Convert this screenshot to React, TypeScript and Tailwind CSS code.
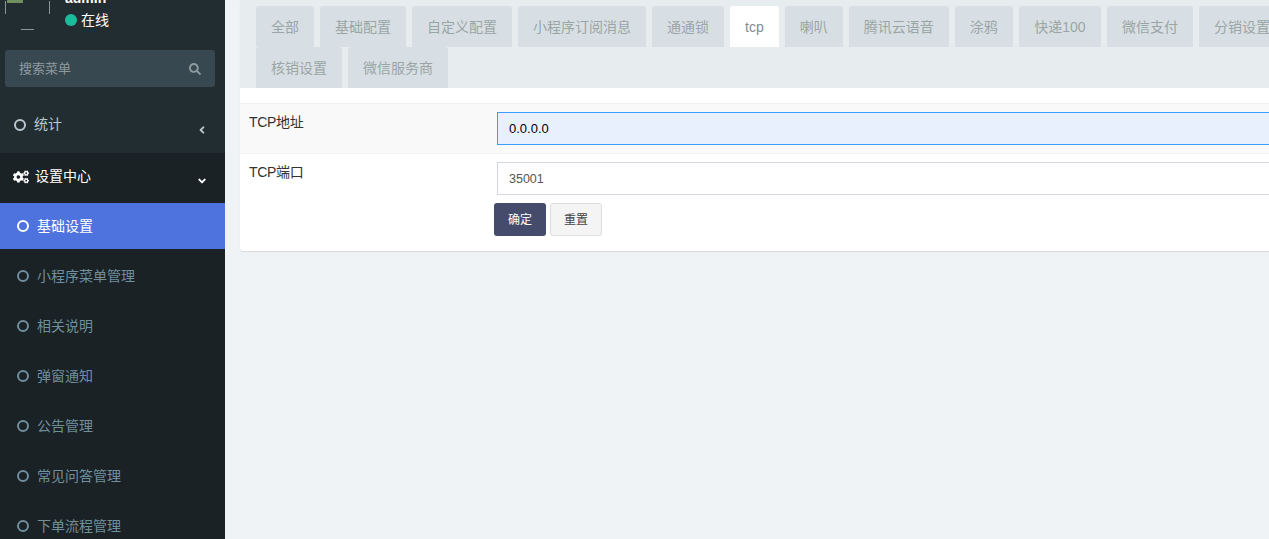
import { FaAngleDown, FaAngleLeft, FaCogs, FaSearch } from "react-icons/fa";

const fontStack = "font-['Liberation_Sans','Noto_Sans_CJK_SC',sans-serif]";

const subItems = ["小程序菜单管理", "相关说明", "弹窗通知", "公告管理", "常见问答管理", "下单流程管理"];

const tabs = [
  "全部",
  "基础配置",
  "自定义配置",
  "小程序订阅消息",
  "通通锁",
  "tcp",
  "喇叭",
  "腾讯云语音",
  "涂鸦",
  "快递100",
  "微信支付",
  "分销设置",
  "核销设置",
  "微信服务商",
];

const Ring = ({ className }: { className: string }) => (
  <span className={`block h-3 w-3 shrink-0 rounded-full border-[2.5px] ${className}`} />
);

const Sidebar = () => (
  <aside className="h-full w-[225px] shrink-0 overflow-hidden bg-[#222d32]">
    <div className="-mt-[15px] flex h-[65px] gap-[15px] pl-[5px]">
      <svg width="45" height="45" viewBox="0 0 45 45" fill="none" className="shrink-0">
        <path d="M0.5 16V29M44.5 16V29M16 44.5H29" stroke="#8a9499" strokeWidth="1" />
        <rect x="2" y="15" width="16" height="3" fill="#6f8f5f" />
      </svg>
      <div className="pt-[4px]">
        <p className="text-sm leading-[18px] font-bold text-white">admin</p>
        <p className="mt-[3px] flex items-center gap-[4px] text-[14px] leading-5 text-white">
          <span className="h-3 w-3 rounded-full bg-[#1abc9c]" />
          在线
        </p>
      </div>
    </div>
    <div className="mr-[10px] ml-[5px] flex h-[37px] items-center justify-between rounded-[3px] bg-[#374850] px-[14px] text-[#8f9a9f]">
      <span className="text-[13px]">搜索菜单</span>
      <FaSearch size={12} />
    </div>
    <div className="mt-[13px] flex h-[53px] items-center pr-[17px] pl-[14px] text-[#b8c7ce]">
      <Ring className="-translate-y-[2px] border-[#b8c7ce]" />
      <span className="ml-2 flex-1 -translate-y-[3px] text-sm">统计</span>
      <FaAngleLeft size={12} className="translate-y-[3px]" />
    </div>
    <div className="flex h-[50px] items-center bg-[#1a2226] pr-[17px] pl-[13px] text-white">
      <FaCogs size={16} className="-translate-y-[1px]" />
      <span className="ml-[6px] flex-1 -translate-y-[2px] text-sm">设置中心</span>
      <FaAngleDown size={12} className="translate-y-[3px]" />
    </div>
    <div className="h-full bg-[#1a2226]">
      <div className="mb-[4px] flex h-[46px] items-center gap-2 bg-[#4e73df] pl-[17px] text-sm text-white">
        <Ring className="border-white" />
        基础设置
      </div>
      {subItems.map((item) => (
        <div key={item} className="mb-[4px] flex h-[46px] items-center gap-2 pl-[17px] text-sm text-[#6f8f9e]">
          <Ring className="border-[#6f8f9e]" />
          {item}
        </div>
      ))}
    </div>
  </aside>
);

const SettingsCard = () => (
  <section className="ml-[15px] h-[251px] w-[1075px] shrink-0 rounded-b-[3px] bg-white shadow-[0_1px_1px_rgba(0,0,0,0.1)]">
    <ul className="flex h-[88px] flex-wrap content-start bg-[#e7ecef] pt-[6px] pl-[16px]">
      {tabs.map((tab) => (
        <li
          key={tab}
          className={`mr-[6px] flex h-[41px] items-center rounded-t-[3px] text-sm ${
            tab === "快递100" ? "px-[15.5px]" : "px-[15px]"
          } ${tab === "tcp" ? "bg-white text-[#7f8c8d]" : "bg-[#d8dfe4] text-[#9aa5a6]"}`}
        >
          {tab}
        </li>
      ))}
    </ul>
    <div className="mt-[15px] flex h-[50px] border-t border-[#f2f2f2] bg-[#f9f9f9]">
      <label className="w-[257px] shrink-0 pt-[8px] pl-[9px] text-sm leading-5 tracking-[-0.3px] text-[#333]">
        TCP地址
      </label>
      <input
        readOnly
        value="0.0.0.0"
        className="mt-[8px] h-[33px] flex-1 border border-[#3c9cff] bg-[#e8f0fe] px-[11px] text-[13px] text-black outline-none"
      />
    </div>
    <div className="flex border-t border-[#f4f4f4]">
      <label className="w-[257px] shrink-0 pt-[8px] pl-[9px] text-sm leading-5 tracking-[-0.3px] text-[#333]">
        TCP端口
      </label>
      <div className="flex-1 pt-[8px]">
        <input
          readOnly
          value="35001"
          className="block h-[33px] w-full border border-[#d2d6de] bg-white px-[11px] text-[12.5px] text-[#555] outline-none"
        />
        <div className="mt-[8px] -ml-[3px] flex gap-[4px]">
          <button type="button" className="h-[33px] w-[52px] rounded-[3px] bg-[#454c6b] text-xs text-white">
            确定
          </button>
          <button
            type="button"
            className="h-[33px] w-[52px] rounded-[3px] border border-[#ddd] bg-[#f4f4f4] text-xs text-[#444]"
          >
            重置
          </button>
        </div>
      </div>
    </div>
  </section>
);

export default function App() {
  return (
    <div className={`flex h-[539px] w-[1269px] overflow-hidden bg-[#eff3f6] ${fontStack}`}>
      <Sidebar />
      <main className="flex min-w-0 flex-1 overflow-hidden">
        <SettingsCard />
      </main>
    </div>
  );
}
